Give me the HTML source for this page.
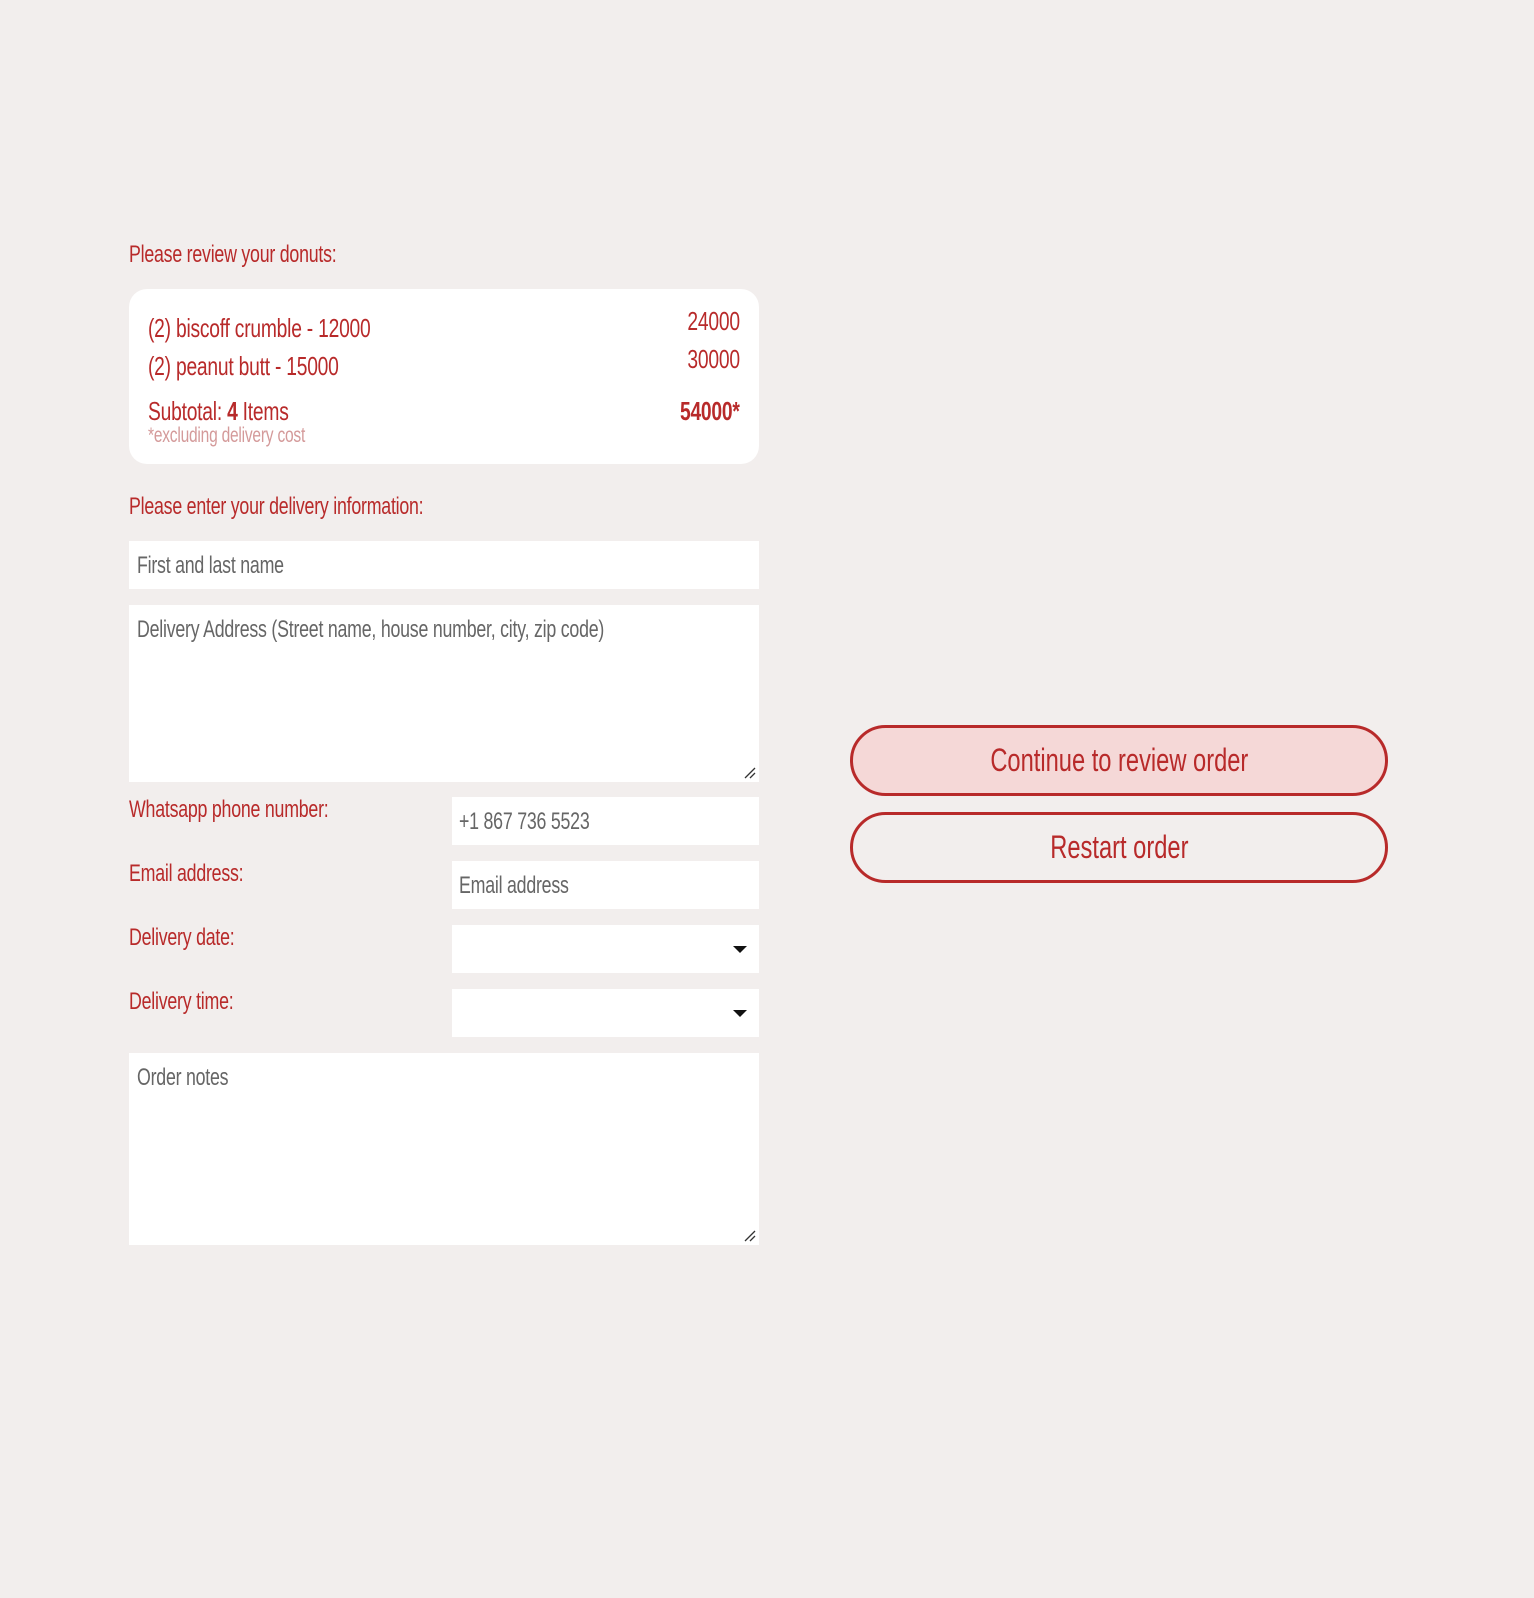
<!DOCTYPE html>
<html><head><style>
body{margin:0;background:#f2eeed;width:1534px;height:1598px;position:relative;font-family:"Liberation Sans",sans-serif;color:#b82a2a;overflow:hidden}
.a{position:absolute}
.t{position:absolute;white-space:nowrap;transform:scaleX(.74);transform-origin:left top}
.r{transform-origin:right top}
.lbl{font-size:24px;letter-spacing:-0.3px}
.box{background:#fff}
.ph{color:#666;font-size:24px;letter-spacing:-0.3px}
.btn{position:absolute;left:850px;width:538px;border:3px solid #b82a2a;border-radius:36px;box-sizing:border-box;text-align:center;font-size:32px}
.btn span{display:inline-block;transform:scaleX(.74)}
.arrow{position:absolute;right:12px;top:21px;width:0;height:0;border-left:7px solid transparent;border-right:7px solid transparent;border-top:7px solid #111}
</style></head><body>
<div class="t lbl" style="left:129px;top:241px">Please review your donuts:</div>
<div class="a box" style="left:129px;top:289px;width:630px;height:175px;border-radius:18px">
 <div class="t lbl" style="left:19px;top:24px;font-size:26px">(2) biscoff crumble - 12000</div>
 <div class="t lbl r" style="right:19px;top:17px;font-size:26px">24000</div>
 <div class="t lbl" style="left:19px;top:62px;font-size:26px">(2) peanut butt - 15000</div>
 <div class="t lbl r" style="right:19px;top:55px;font-size:26px">30000</div>
 <div class="t lbl" style="left:19px;top:107px;font-size:26px">Subtotal: <b>4</b> Items</div>
 <div class="t lbl r" style="right:19px;top:107px;font-size:26px;font-weight:bold">54000*</div>
 <div class="t lbl" style="left:19px;top:135px;font-size:21px;color:#d49a9a">*excluding delivery cost</div>
</div>
<div class="t lbl" style="left:129px;top:493px">Please enter your delivery information:</div>
<div class="a box" style="left:129px;top:541px;width:630px;height:48px"><div class="t ph" style="left:8px;top:11px">First and last name</div></div>
<div class="a box" style="left:129px;top:605px;width:630px;height:177px"><div class="t ph" style="left:8px;top:11px">Delivery Address (Street name, house number, city, zip code)</div>
<svg class="a" style="right:3px;bottom:3px" width="12" height="12"><path d="M1 11L11 1M6 11L11 6" stroke="#333" stroke-width="1.3"/></svg></div>
<div class="t lbl" style="left:129px;top:796px">Whatsapp phone number:</div>
<div class="a box" style="left:452px;top:797px;width:307px;height:48px"><div class="t ph" style="left:7px;top:11px">+1 867 736 5523</div></div>
<div class="t lbl" style="left:129px;top:860px">Email address:</div>
<div class="a box" style="left:452px;top:861px;width:307px;height:48px"><div class="t ph" style="left:7px;top:11px">Email address</div></div>
<div class="t lbl" style="left:129px;top:924px">Delivery date:</div>
<div class="a box" style="left:452px;top:925px;width:307px;height:48px"><div class="arrow"></div></div>
<div class="t lbl" style="left:129px;top:988px">Delivery time:</div>
<div class="a box" style="left:452px;top:989px;width:307px;height:48px"><div class="arrow"></div></div>
<div class="a box" style="left:129px;top:1053px;width:630px;height:192px"><div class="t ph" style="left:8px;top:11px">Order notes</div>
<svg class="a" style="right:3px;bottom:3px" width="12" height="12"><path d="M1 11L11 1M6 11L11 6" stroke="#333" stroke-width="1.3"/></svg></div>
<div class="btn" style="top:725px;height:71px;line-height:65px;background:#f5d8d7"><span>Continue to review order</span></div>
<div class="btn" style="top:812px;height:71px;line-height:65px"><span>Restart order</span></div>
</body></html>
